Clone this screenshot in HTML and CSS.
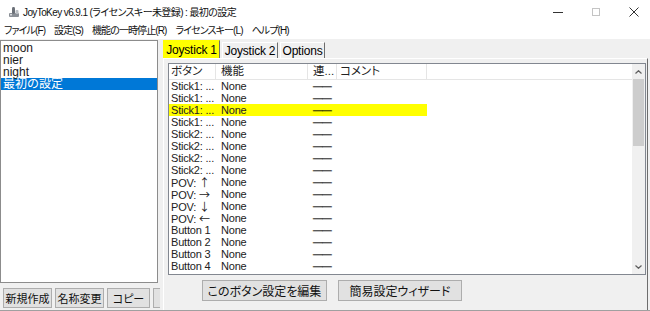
FILE: index.html
```html
<!DOCTYPE html>
<html lang="ja">
<head>
<meta charset="utf-8">
<title>JoyToKey</title>
<link rel="stylesheet" href="styles.css">
</head>
<body>
<div class="window">
  <div class="titlebar">
    <svg class="app-icon" viewBox="0 0 12 12" width="12" height="12">
      <rect x="1" y="7" width="10" height="4" rx="1" fill="#8a8f96"/>
      <rect x="4" y="1" width="3" height="7" rx="1.4" fill="#6b7078"/>
      <rect x="7.5" y="4" width="3" height="4" rx="1" fill="#b9bdc2"/>
      <rect x="2" y="8" width="2" height="1.5" fill="#d7dadd"/>
    </svg>
    <span class="title">JoyToKey v6.9.1 (ライセンスキー未登録) : 最初の設定</span>
    <div class="controls">
      <svg class="ctl" viewBox="0 0 10 10"><line x1="0" y1="5.5" x2="10" y2="5.5" stroke="#333" stroke-width="1"/></svg>
      <svg class="ctl" viewBox="0 0 10 10"><rect x="1.5" y="1.5" width="7" height="7" fill="none" stroke="#c4c4c4" stroke-width="1"/></svg>
      <svg class="ctl" viewBox="0 0 10 10"><path d="M0.5 0.5 L9.5 9.5 M9.5 0.5 L0.5 9.5" stroke="#333" stroke-width="1"/></svg>
    </div>
  </div>
  <div class="menubar">
    <span>ファイル(F)</span>
    <span>設定(S)</span>
    <span>機能の一時停止(R)</span>
    <span>ライセンスキー(L)</span>
    <span>ヘルプ(H)</span>
  </div>
  <div class="client">
    <div class="left">
      <div class="listbox">
        <div class="item">moon</div>
        <div class="item">nier</div>
        <div class="item">night</div>
        <div class="item sel">最初の設定</div>
      </div>
      <div class="btnrow">
        <div class="btn w49">新規作成</div>
        <div class="btn w49">名称変更</div>
        <div class="btn w43">コピー</div>
        <div class="btn w43">削除</div>
      </div>
    </div>
    <div class="right">
      <div class="tabs">
        <div class="tab active">Joystick 1</div>
        <div class="tab t2">Joystick 2</div>
        <div class="tab t3">Options</div>
      </div>
      <div class="pane">
        <div class="listview">
          <div class="lv-main">
            <div class="lv-head">
              <div class="hc c1">ボタン</div>
              <div class="hc c2">機能</div>
              <div class="hc c3">連...</div>
              <div class="hc c4">コメント</div>
              <div class="hc c5"></div>
            </div>
            <div class="lv-body">
              <div class="row"><div class="c c1">Stick1: ...</div><div class="c c2">None</div><div class="c c3"><span class="dash">──</span></div><div class="c c4"></div></div>
              <div class="row"><div class="c c1">Stick1: ...</div><div class="c c2">None</div><div class="c c3"><span class="dash">──</span></div><div class="c c4"></div></div>
              <div class="row hl"><div class="c c1">Stick1: ...</div><div class="c c2">None</div><div class="c c3"><span class="dash">──</span></div><div class="c c4"></div></div>
              <div class="row"><div class="c c1">Stick1: ...</div><div class="c c2">None</div><div class="c c3"><span class="dash">──</span></div><div class="c c4"></div></div>
              <div class="row"><div class="c c1">Stick2: ...</div><div class="c c2">None</div><div class="c c3"><span class="dash">──</span></div><div class="c c4"></div></div>
              <div class="row"><div class="c c1">Stick2: ...</div><div class="c c2">None</div><div class="c c3"><span class="dash">──</span></div><div class="c c4"></div></div>
              <div class="row"><div class="c c1">Stick2: ...</div><div class="c c2">None</div><div class="c c3"><span class="dash">──</span></div><div class="c c4"></div></div>
              <div class="row"><div class="c c1">Stick2: ...</div><div class="c c2">None</div><div class="c c3"><span class="dash">──</span></div><div class="c c4"></div></div>
              <div class="row"><div class="c c1">POV: <span class="arr">↑</span></div><div class="c c2">None</div><div class="c c3"><span class="dash">──</span></div><div class="c c4"></div></div>
              <div class="row"><div class="c c1">POV: <span class="arr">→</span></div><div class="c c2">None</div><div class="c c3"><span class="dash">──</span></div><div class="c c4"></div></div>
              <div class="row"><div class="c c1">POV: <span class="arr">↓</span></div><div class="c c2">None</div><div class="c c3"><span class="dash">──</span></div><div class="c c4"></div></div>
              <div class="row"><div class="c c1">POV: <span class="arr">←</span></div><div class="c c2">None</div><div class="c c3"><span class="dash">──</span></div><div class="c c4"></div></div>
              <div class="row"><div class="c c1">Button 1</div><div class="c c2">None</div><div class="c c3"><span class="dash">──</span></div><div class="c c4"></div></div>
              <div class="row"><div class="c c1">Button 2</div><div class="c c2">None</div><div class="c c3"><span class="dash">──</span></div><div class="c c4"></div></div>
              <div class="row"><div class="c c1">Button 3</div><div class="c c2">None</div><div class="c c3"><span class="dash">──</span></div><div class="c c4"></div></div>
              <div class="row"><div class="c c1">Button 4</div><div class="c c2">None</div><div class="c c3"><span class="dash">──</span></div><div class="c c4"></div></div>
            </div>
          </div>
          <div class="scrollbar">
            <div class="sb-btn"><svg viewBox="0 0 7 4" width="7" height="4"><path d="M0.5 3.5 L3.5 0.7 L6.5 3.5" fill="none" stroke="#606060" stroke-width="1.2"/></svg></div>
            <div class="sb-thumb"></div>
            <div class="sb-track"></div>
            <div class="sb-btn"><svg viewBox="0 0 7 4" width="7" height="4"><path d="M0.5 0.5 L3.5 3.3 L6.5 0.5" fill="none" stroke="#606060" stroke-width="1.2"/></svg></div>
          </div>
        </div>
        <div class="actions">
          <div class="btn big w125">このボタン設定を編集</div>
          <div class="btn big w124">簡易設定ウィザード</div>
        </div>
      </div>
    </div>
  </div>
</div>
</body>
</html>
```

FILE: styles.css
```css
* { box-sizing: border-box; margin: 0; padding: 0; }
html, body { width: 650px; height: 311px; overflow: hidden; }
body {
  background: #fff;
  font-family: "Liberation Sans", "Noto Sans CJK JP", sans-serif;
  font-size: 12px;
  color: #1a1a1a;
  font-feature-settings: "palt";
}
.window { display: flex; flex-direction: column; height: 311px; }

.titlebar { height: 23px; flex: none; display: flex; align-items: center; padding-left: 8px; }
.app-icon { width: 12px; height: 12px; margin-right: 3px; flex: none; }
.title { font-family: "Liberation Sans", "Noto Sans CJK JP", sans-serif; font-size: 10px; letter-spacing: -0.6px; color: #111; }
.controls { margin-left: auto; margin-right: 11px; display: flex; gap: 28px; align-items: center; }
.ctl { width: 10px; height: 10px; display: block; }

.menubar {
  height: 16px; flex: none; display: flex; gap: 9px; padding-left: 4px;
  font-family: "Liberation Sans", "Noto Sans CJK JP", sans-serif; font-size: 10px; letter-spacing: -0.9px; line-height: 15px; color: #111;
}

.client { flex: 1; display: flex; background: #f0f0f0; border-bottom: 1px solid #a0a0a0; min-height: 0; }

.left { width: 160px; flex: none; overflow: hidden; display: flex; flex-direction: column; }
.listbox {
  margin-top: 1px; width: 158px; height: 243px; flex: none;
  background: #fff; border: 1px solid #8c8c8c; padding: 1px 0 0 0;
}
.item { height: 12px; line-height: 12px; padding-left: 2px; white-space: nowrap; font-feature-settings: normal; }
.item.sel { background: #0078d7; color: #fff; }
.btnrow { display: flex; gap: 3px; margin-top: 5px; padding-left: 3px; }

.btn {
  flex: none; height: 20px; background: #e1e1e1; border: 1px solid #adadad;
  font-family: "Noto Sans CJK JP", sans-serif; font-size: 11px; color: #111;
  display: flex; align-items: center; justify-content: center; white-space: nowrap;
}
.w49 { width: 49px; }
.w43 { width: 43px; }
.w125 { width: 125px; }
.w124 { width: 124px; }
.btn.big { height: 21px; font-size: 12px; }

.right { width: 485px; flex: none; margin-left: 3px; display: flex; flex-direction: column; }
.tabs { height: 19px; flex: none; display: flex; align-items: flex-end; }
.tab {
  height: 16px; margin-right: 2px; display: flex; align-items: center; justify-content: center;
  border-top: 1px solid #fff; border-left: 1px solid #fff; border-right: 1px solid #6d6d6d;
  white-space: nowrap; color: #000; letter-spacing: -0.2px;
}
.tab.active { height: 18px; width: 57px; background: #ffff00; border-color: #ffff00 #6d6d6d #ffff00 #ffff00; }
.tab.t2 { width: 56px; }
.tab.t3 { width: 45px; }

.pane {
  flex: 1; display: flex; flex-direction: column;
  border-top: 1px solid #fff; border-left: 1px solid #fff; border-right: 1px solid #6d6d6d;
  padding: 4px 1px 0 4px;
}
.listview { height: 212px; flex: none; display: flex; border: 1px solid #828790; background: #fff; }
.lv-main { flex: 1; display: flex; flex-direction: column; overflow: hidden; }
.lv-head { height: 16px; flex: none; display: flex; border-bottom: 1px solid #e5e5e5; }
.hc {
  height: 15px; line-height: 15px; border-right: 1px solid #e5e5e5; flex: none;
  font-family: "Liberation Sans", "Noto Sans CJK JP", sans-serif; font-size: 11.5px; color: #222; white-space: nowrap; overflow: hidden;
}
.c1 { width: 47px; padding-left: 2px; }
.c2 { width: 92px; padding-left: 5px; }
.c3 { width: 29px; padding-left: 5px; }
.c4 { width: 90px; padding-left: 3px; }
.hc.c5 { flex: 1; border-right: none; }
.lv-body { flex: 1; display: flex; flex-direction: column; }
.row { height: 12px; flex: none; display: flex; }
.c { height: 12px; line-height: 12px; flex: none; white-space: nowrap; overflow: hidden; font-size: 11px; letter-spacing: -0.2px; color: #222; }
.row.hl .c { background: #ffff00; }
.arr { font-family: "Noto Sans CJK JP", sans-serif; font-size: 11px; font-feature-settings: normal; color: #222; }
.dash {
  font-family: "Noto Sans CJK JP", sans-serif; font-size: 9.5px; font-weight: 700; color: #000;
  letter-spacing: -0.3px; font-feature-settings: normal; -webkit-text-stroke: 0.35px #000;
}

.scrollbar { width: 13px; flex: none; display: flex; flex-direction: column; background: #f0f0f0; }
.sb-btn { height: 15px; flex: none; display: flex; align-items: center; justify-content: center; }
.sb-thumb { height: 67px; flex: none; background: #cdcdcd; margin: 0 1px; }
.sb-track { flex: 1; }

.actions { display: flex; gap: 11px; margin-top: 5px; margin-left: 34px; }
```
